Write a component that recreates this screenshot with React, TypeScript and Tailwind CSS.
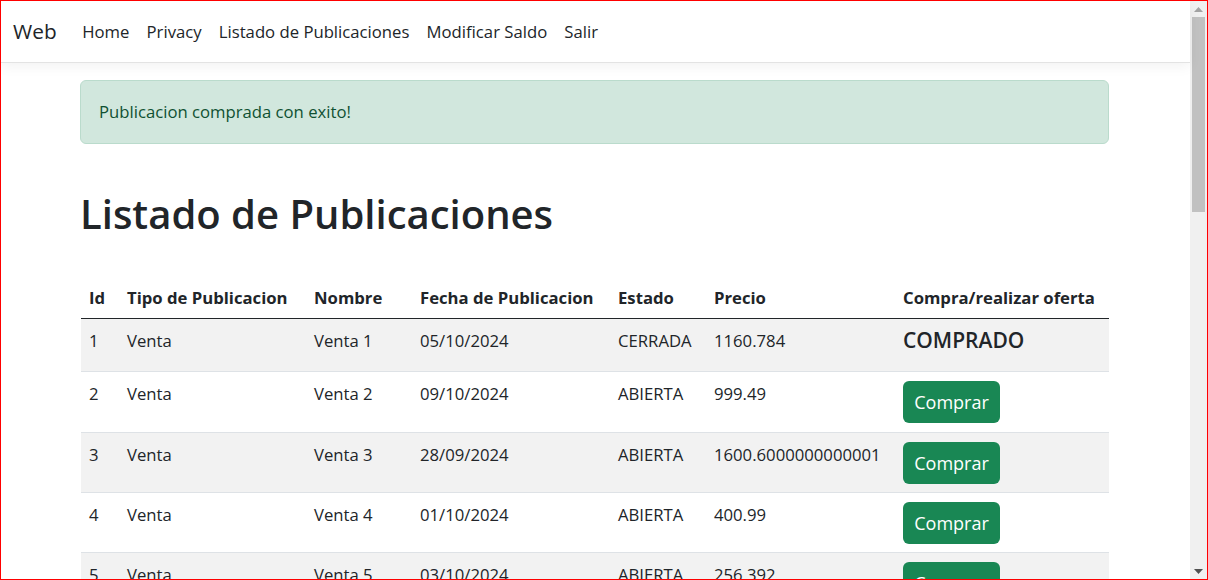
const rows = [
  { id: 1, tipo: 'Venta', nombre: 'Venta 1', fecha: '05/10/2024', estado: 'CERRADA', precio: '1160.784', comprado: true },
  { id: 2, tipo: 'Venta', nombre: 'Venta 2', fecha: '09/10/2024', estado: 'ABIERTA', precio: '999.49', comprado: false },
  { id: 3, tipo: 'Venta', nombre: 'Venta 3', fecha: '28/09/2024', estado: 'ABIERTA', precio: '1600.6000000000001', comprado: false },
  { id: 4, tipo: 'Venta', nombre: 'Venta 4', fecha: '01/10/2024', estado: 'ABIERTA', precio: '400.99', comprado: false },
  { id: 5, tipo: 'Venta', nombre: 'Venta 5', fecha: '03/10/2024', estado: 'ABIERTA', precio: '256.392', comprado: false },
];

const navLinks = ['Home', 'Privacy', 'Listado de Publicaciones', 'Modificar Saldo', 'Salir'];

const Scrollbar = () => {
  return (
    <div className="flex w-[17px] shrink-0 flex-col items-center bg-[#f0f0f0]">
      <div className="flex h-[16px] w-full items-center justify-center">
        <svg width="9" height="5" viewBox="0 0 9 5">
          <path d="M0 5 L4.5 0 L9 5 Z" fill="#a3a3a3" />
        </svg>
      </div>
      <div className="h-[195px] w-[13px] bg-[#c1c1c1]"></div>
      <div className="flex-1"></div>
      <div className="flex h-[16px] w-full items-center justify-center">
        <svg width="9" height="5" viewBox="0 0 9 5">
          <path d="M0 0 L9 0 L4.5 5 Z" fill="#505050" />
        </svg>
      </div>
    </div>
  );
};

const Navbar = () => {
  return (
    <nav className="relative z-10 flex h-[62px] shrink-0 items-center border-b border-[#e3e3e3] bg-white pl-[12px] shadow-[0_4px_12px_rgba(0,0,0,0.05)]">
      <span className="mr-[17px] text-[20.8px] text-[#212529]">Web</span>
      <ul className="flex items-center">
        {navLinks.map((link) => (
          <li key={link}>
            <a className="block px-[8.6px] text-[16.7px] text-[#212529]">{link}</a>
          </li>
        ))}
      </ul>
    </nav>
  );
};

export default function App() {
  return (
    <div
      className="flex h-[580px] w-[1208px] overflow-hidden border border-[#ff0000] bg-white text-[#212529]"
      style={{ fontFamily: '"Open Sans", sans-serif' }}
    >
      <div className="flex min-w-0 flex-1 flex-col">
        <Navbar />
        <main className="pl-[79px] pr-[81px] pt-[17px]">
          <div className="flex h-[64px] items-center rounded-[6px] border border-[#badbcc] bg-[#d1e7dd] px-[18px] text-[16.7px] text-[#0f5132]">
            Publicacion comprada con exito!
          </div>
          <h1 className="mt-[46px] text-[40px] font-semibold leading-[1.2] text-[#212529]">
            Listado de Publicaciones
          </h1>
          <table className="ml-[1px] mt-[40px] w-[1028px] table-fixed border-collapse text-left text-[16.7px] leading-[24px]">
            <colgroup>
              <col className="w-[38px]" />
              <col className="w-[187px]" />
              <col className="w-[106px]" />
              <col className="w-[198px]" />
              <col className="w-[96px]" />
              <col className="w-[189px]" />
              <col className="w-[214px]" />
            </colgroup>
            <thead>
              <tr className="h-[40px] border-b border-[#212529] font-bold">
                <th className="px-2 align-middle">Id</th>
                <th className="px-2 align-middle">Tipo de Publicacion</th>
                <th className="px-2 align-middle">Nombre</th>
                <th className="px-2 align-middle">Fecha de Publicacion</th>
                <th className="px-2 align-middle">Estado</th>
                <th className="px-2 align-middle">Precio</th>
                <th className="px-2 align-middle">Compra/realizar oferta</th>
              </tr>
            </thead>
            <tbody>
              {rows.map((r, i) => (
                <tr
                  key={r.id}
                  className={`border-b border-[#dee2e6] align-top ${i % 2 === 0 ? 'bg-[#f2f2f2]' : 'bg-white'} ${
                    r.comprado ? 'h-[53px]' : i === 1 ? 'h-[61px]' : 'h-[60px]'
                  }`}
                >
                  <td className="px-2 pt-[10px]">{r.id}</td>
                  <td className="px-2 pt-[10px]">{r.tipo}</td>
                  <td className="px-2 pt-[10px]">{r.nombre}</td>
                  <td className="px-2 pt-[10px]">{r.fecha}</td>
                  <td className="px-2 pt-[10px]">{r.estado}</td>
                  <td className="px-2 pt-[10px]">{r.precio}</td>
                  <td className="px-2 pt-[9px]">
                    {r.comprado ? (
                      <span className="text-[21px] font-semibold leading-[1.2]">COMPRADO</span>
                    ) : (
                      <button className="h-[42px] w-[97px] rounded-[6px] bg-[#198754] text-[18px] text-white">
                        Comprar
                      </button>
                    )}
                  </td>
                </tr>
              ))}
            </tbody>
          </table>
        </main>
      </div>
      <Scrollbar />
    </div>
  );
}
